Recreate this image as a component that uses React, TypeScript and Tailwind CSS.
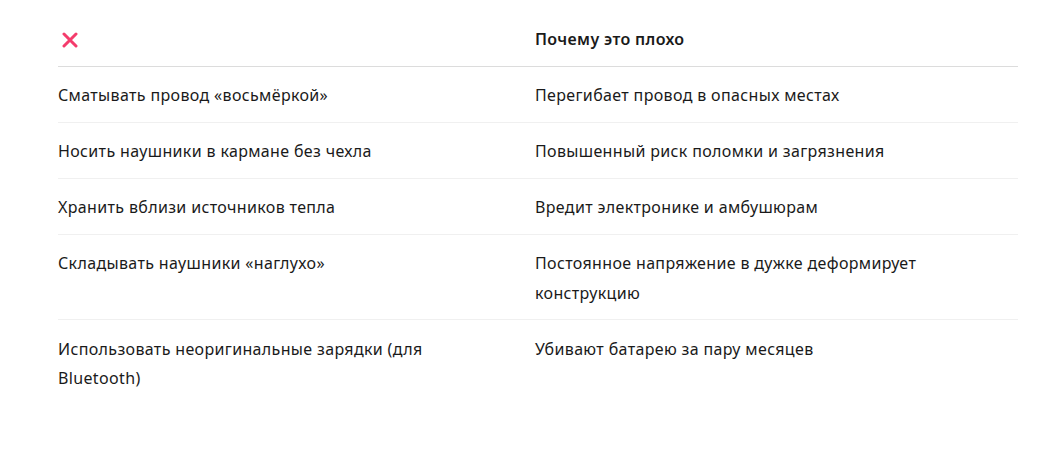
import React from "react";

const rows: [string, string][] = [
  ["Сматывать провод «восьмёркой»", "Перегибает провод в опасных местах"],
  ["Носить наушники в кармане без чехла", "Повышенный риск поломки и загрязнения"],
  ["Хранить вблизи источников тепла", "Вредит электронике и амбушюрам"],
  ["Складывать наушники «наглухо»", "Постоянное напряжение в дужке деформирует конструкцию"],
  ["Использовать неоригинальные зарядки (для Bluetooth)", "Убивают батарею за пару месяцев"],
];

export default function App() {
  return (
    <div
      className="min-h-screen bg-white pt-[12px] text-[16px] leading-[29.5px] tracking-[0.35px] text-[#1a1a1a]"
      style={{ fontFamily: '"Noto Sans", "Open Sans", sans-serif' }}
    >
      <div className="mx-[58px] w-[960px]">
        <div className="grid grid-cols-[477px_1fr] border-b border-[#dcdcdc] pt-[13px] pb-[11px]">
          <div className="flex items-center h-[29.5px]">
            <svg width="16" height="16" viewBox="0 0 16 16" className="ml-[4px]">
              <path d="M2 2 L14 14 M14 2 L2 14" stroke="#f43c6c" strokeWidth="3" strokeLinecap="round" />
            </svg>
          </div>
          <div className="font-semibold">Почему это плохо</div>
        </div>
        {rows.map(([a, b], i) => (
          <div
            key={i}
            className={`grid grid-cols-[477px_1fr] pt-[14.5px] pb-[11px] ${i < rows.length - 1 ? "border-b border-[#f0f0f0]" : ""}`}
          >
            <div className="pr-[60px]">{a}</div>
            <div className="pr-[80px]">{b}</div>
          </div>
        ))}
      </div>
    </div>
  );
}
